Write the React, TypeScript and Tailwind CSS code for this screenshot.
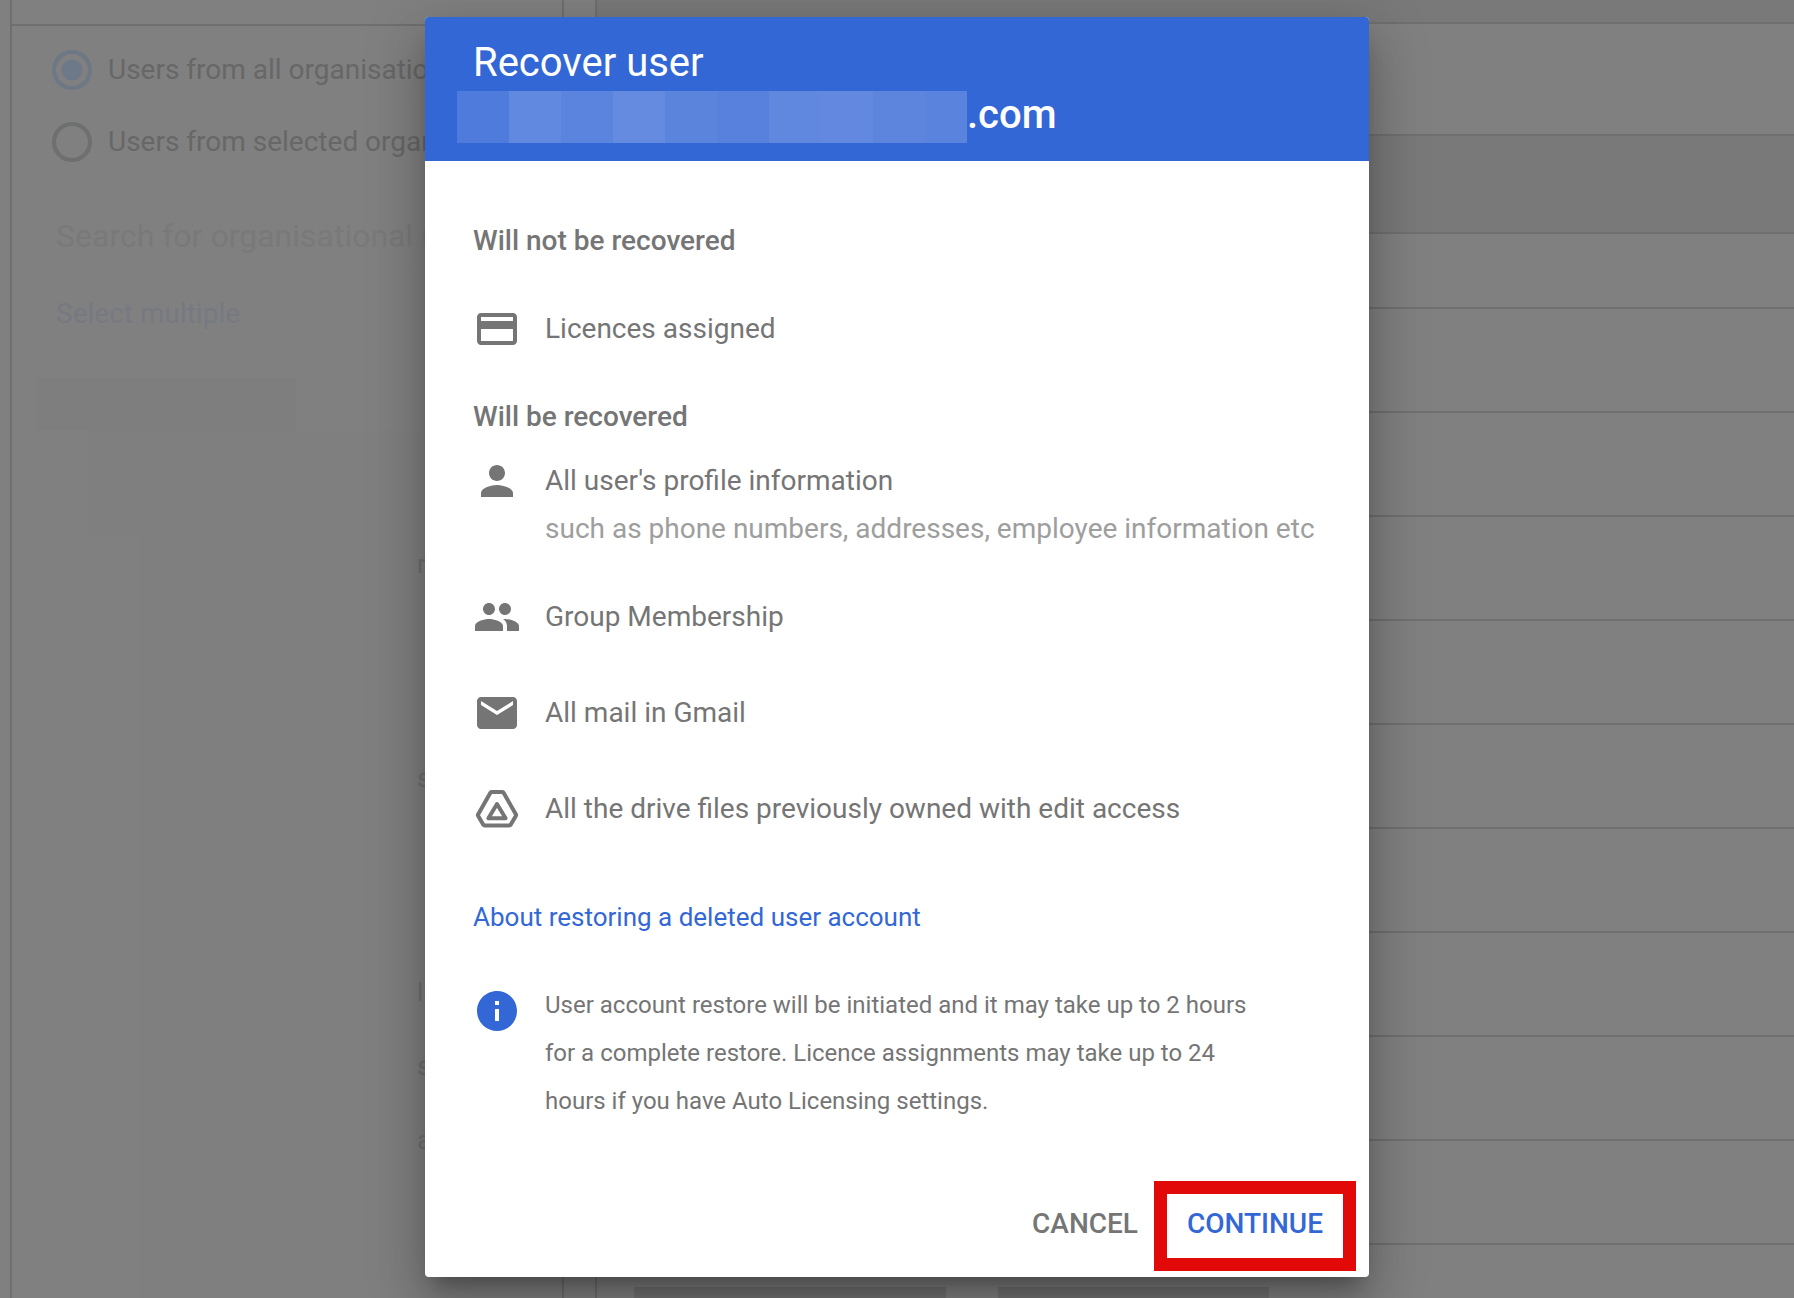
import type { ReactNode } from "react";

function Icon({ children, className = "text-[#757575]" }: { children: ReactNode; className?: string }) {
  return (
    <svg viewBox="0 0 24 24" fill="currentColor" aria-hidden="true" className={`size-12 shrink-0 ${className}`}>
      {children}
    </svg>
  );
}

const cardIcon = (
  <path d="M20 4H4c-1.11 0-1.99.89-1.99 2L2 18c0 1.11.89 2 2 2h16c1.11 0 2-.89 2-2V6c0-1.11-.89-2-2-2zm0 14H4v-6h16v6zm0-10H4V6h16v2z" />
);
const personIcon = (
  <path d="M12 12c2.21 0 4-1.79 4-4s-1.79-4-4-4-4 1.79-4 4 1.79 4 4 4zm0 2c-2.67 0-8 1.34-8 4v2h16v-2c0-2.66-5.33-4-8-4z" />
);
const groupIcon = (
  <path d="M16 11c1.66 0 2.99-1.34 2.99-3S17.66 5 16 5s-3 1.34-3 3 1.34 3 3 3zm-8 0c1.66 0 2.99-1.34 2.99-3S9.66 5 8 5 5 6.34 5 8s1.34 3 3 3zm0 2c-2.33 0-7 1.17-7 3.5V19h14v-2.500c0-2.330-4.670-3.500-7-3.500zm8 0c-.29 0-.62.020-.970.050 1.160.840 1.970 1.970 1.970 3.450V19h6v-2.500c0-2.330-4.670-3.500-7-3.500z" />
);
const mailIcon = (
  <path d="M20 4H4c-1.100 0-2 .9-2 2v12c0 1.100.9 2 2 2h16c1.100 0 2-.9 2-2V6c0-1.100-.9-2-2-2zm0 4l-8 5-8-5V6l8 5 8-5v2z" />
);
const driveIcon = (
  <g fill="none" stroke="currentColor" strokeWidth="2" strokeLinejoin="round">
    <path d="M9.300 3.500h5.400c.3 0 .5.100.6.400l6.100 10.700c.2.300.2.600 0 .9l-2.500 4.300c-.2.300-.4.400-.8.400H5.900c-.4 0-.6-.1-.8-.4l-2.500-4.300c-.2-.3-.2-.6 0-.9L8.700 3.900c.1-.3.300-.4.600-.4z" />
    <path d="M12 9.500 7.700 16.600h8.600z" />
  </g>
);
const infoIcon = (
  <path d="M12 2C6.480 2 2 6.480 2 12s4.480 10 10 10 10-4.480 10-10S17.520 2 12 2zm1 15h-2v-6h2v6zm0-8h-2V7h2v2z" />
);

function Item({ icon, title, note }: { icon: ReactNode; title: string; note?: string }) {
  return (
    <li className="flex items-start gap-6">
      <Icon>{icon}</Icon>
      <div>
        <p>{title}</p>
        {note && <p className="text-[#9e9e9e]">{note}</p>}
      </div>
    </li>
  );
}

function ScopeOption({ label, checked }: { label: string; checked?: boolean }) {
  return (
    <label className="flex items-center gap-4 whitespace-nowrap text-[28px] leading-10 text-[#676767]">
      <input
        type="radio"
        name="scope"
        defaultChecked={checked}
        className="size-10 shrink-0 appearance-none rounded-full border-4 border-[#6e6f6f] checked:border-[#6d7785] checked:bg-[radial-gradient(circle,#6d7888_10px,transparent_11px)]"
      />
      {label}
    </label>
  );
}

function FilterPanel() {
  return (
    <aside className="ml-2.5 w-[554px] shrink-0 border-x-2 border-[#6f6f6f]">
      <div className="h-[26px] border-b-2 border-[#6f6f6f]" />
      <div className="flex flex-col pt-6 pl-10">
        <ScopeOption label="Users from all organisational units" checked />
        <div className="mt-8">
          <ScopeOption label="Users from selected organisational units" />
        </div>
        <input
          type="text"
          aria-label="Search for organisational units"
          placeholder="Search for organisational units"
          className="mt-11 ml-1 h-15 border-b border-[#7e7e7e] bg-transparent text-[32px] outline-none placeholder:text-[#797979]"
        />
        <a href="#select" className="mt-6 ml-1 text-[28px] leading-12 text-[#777982]">
          Select multiple
        </a>
      </div>
      <div className="mt-10 ml-6 h-[52px] w-[260px] bg-[#7e7e7e]" />
      <div className="ml-19 h-[104px] w-[360px] bg-[#7f7f7f]" />
      <ul className="ml-32 h-[780px] w-[310px] bg-[#7f7f7f] pt-1.5 pl-[277px] text-[26px] leading-12 text-[#6f6f6f]">
        <li>r</li>
        <li className="mt-[166px]">s</li>
        <li className="mt-[166px]">l</li>
        <li className="mt-[26px]">s</li>
        <li className="mt-[26px]">a</li>
      </ul>
    </aside>
  );
}

const rowHeights = [
  "h-[24px] bg-[#797979]",
  "h-[112px]",
  "h-[98px] bg-[#797979]",
  "h-[75px]",
  "h-[104px]",
  "h-[104px]",
  "h-[104px]",
  "h-[104px]",
  "h-[104px]",
  "h-[104px]",
  "h-[104px]",
  "h-[104px]",
  "h-[104px]",
];

function UserList() {
  return (
    <section className="ml-[31px] grow border-l-2 border-[#6f6f6f]">
      {rowHeights.map((row, i) => (
        <div key={i} className={`border-b-2 border-[#6f6f6f] ${row}`} />
      ))}
      <div className="flex gap-[52px] pt-[42px] pl-[37px]">
        <div className="h-16 w-[312px] bg-[#727272]" />
        <div className="h-16 w-[271px] bg-[#727272]" />
      </div>
    </section>
  );
}

const maskedBlocks = [
  "w-[52px] bg-[#4f7bdc]",
  "w-[52px] bg-[#6189df]",
  "w-[52px] bg-[#5a84dd]",
  "w-[52px] bg-[#648be0]",
  "w-[52px] bg-[#5b84dd]",
  "w-[52px] bg-[#5781dc]",
  "w-[52px] bg-[#6188df]",
  "w-[52px] bg-[#6289df]",
  "w-[52px] bg-[#5d85de]",
  "w-[42px] bg-[#5a83dd]",
];

function RecoverDialog() {
  return (
    <div
      role="dialog"
      aria-modal="true"
      aria-labelledby="recover-title"
      className="w-full max-w-[944px] rounded bg-white text-[28px] leading-12 text-[#757575] shadow-[0_32px_48px_4px_rgba(0,0,0,0.14),0_12px_60px_10px_rgba(0,0,0,0.12),0_16px_20px_-10px_rgba(0,0,0,0.3)]"
    >
      <header className="rounded-t bg-[#3367d6] pt-5 pb-5 text-[40px] leading-[52px] text-white">
        <h1 id="recover-title" className="px-12">
          Recover user
        </h1>
        <div className="flex h-[52px] items-start pl-8">
          <div className="mt-0.5 flex h-[52px]">
            {maskedBlocks.map((block, i) => (
              <span key={i} className={block} />
            ))}
          </div>
          <span className="font-medium">.com</span>
        </div>
      </header>

      <div className="px-12 pt-14">
        <h2 className="font-medium">Will not be recovered</h2>
        <ul className="mt-10">
          <Item icon={cardIcon} title="Licences assigned" />
        </ul>
        <h2 className="mt-10 font-medium">Will be recovered</h2>
        <ul className="mt-4">
          <Item
            icon={personIcon}
            title="All user's profile information"
            note="such as phone numbers, addresses, employee information etc"
          />
        </ul>
        <ul className="mt-10 flex flex-col gap-12">
          <Item icon={groupIcon} title="Group Membership" />
          <Item icon={mailIcon} title="All mail in Gmail" />
          <Item icon={driveIcon} title="All the drive files previously owned with edit access" />
        </ul>
        <a href="#about" className="mt-15 block text-[26px] text-[#3367d6]">
          About restoring a deleted user account
        </a>
        <div className="mt-10 flex items-start gap-6 pr-14">
          <div className="pt-1.5">
            <Icon className="text-[#3367d6]">{infoIcon}</Icon>
          </div>
          <p className="text-2xl leading-12">
            User account restore will be initiated and it may take up to 2 hours for a complete restore. Licence
            assignments may take up to 24 hours if you have Auto Licensing settings.
          </p>
        </div>
      </div>

      <footer className="mt-14 flex items-center justify-end pr-[13px] pb-1.5 font-medium">
        <button type="button" className="px-4 pb-1">
          CANCEL
        </button>
        <button
          type="button"
          className="h-[90px] w-[202px] border-[13px] border-[#e20a08] pb-1 text-[#3367d6]"
        >
          CONTINUE
        </button>
      </footer>
    </div>
  );
}

export default function App() {
  return (
    <div className="relative h-screen overflow-hidden bg-[#808080] font-[Roboto,sans-serif]">
      <div className="flex h-full items-stretch overflow-hidden">
        <FilterPanel />
        <UserList />
      </div>
      <div className="absolute inset-0 flex items-start justify-center pt-[17px]">
        <RecoverDialog />
      </div>
    </div>
  );
}
